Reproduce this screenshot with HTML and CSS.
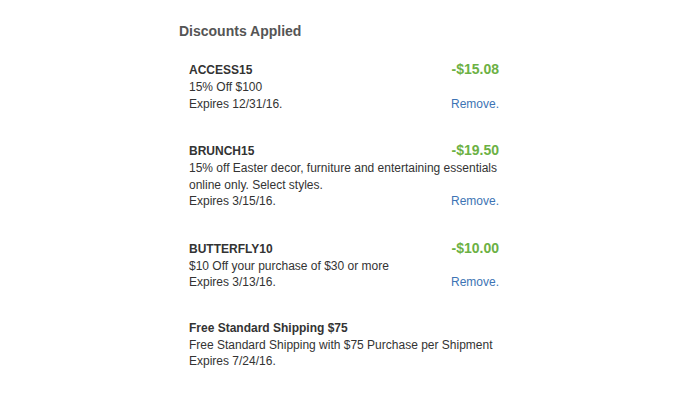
FILE: index.html
```html
<!DOCTYPE html>
<html>
<head>
<meta charset="utf-8">
<link rel="stylesheet" href="styles.css">
</head>
<body>
<section class="panel">
  <h2 class="title">Discounts Applied</h2>
  <div class="list">
    <div class="item">
      <div class="row head"><span class="code">ACCESS15</span><span class="amount">-$15.08</span></div>
      <div class="desc">15% Off $100</div>
      <div class="row"><span>Expires 12/31/16.</span><a class="remove" href="#">Remove.</a></div>
    </div>
    <div class="item">
      <div class="row head"><span class="code">BRUNCH15</span><span class="amount">-$19.50</span></div>
      <div class="desc">15% off Easter decor, furniture and entertaining essentials online only. Select styles.</div>
      <div class="row"><span>Expires 3/15/16.</span><a class="remove" href="#">Remove.</a></div>
    </div>
    <div class="item">
      <div class="row head"><span class="code">BUTTERFLY10</span><span class="amount">-$10.00</span></div>
      <div class="desc">$10 Off your purchase of $30 or more</div>
      <div class="row"><span>Expires 3/13/16.</span><a class="remove" href="#">Remove.</a></div>
    </div>
    <div class="item item-plain">
      <div class="row head"><span class="code">Free Standard Shipping $75</span></div>
      <div class="desc">Free Standard Shipping with $75 Purchase per Shipment</div>
      <div class="row"><span>Expires 7/24/16.</span></div>
    </div>
  </div>
</section>
</body>
</html>
```
FILE: styles.css
```css
html, body {
  margin: 0;
  padding: 0;
  background: #fff;
}
body {
  font-family: "Liberation Sans", Arial, Helvetica, sans-serif;
  color: #333;
  font-size: 12px;
}
.panel {
  margin-left: 179px;
  width: 320px;
  padding-top: 22px;
}
.title {
  margin: 0;
  font-size: 14px;
  line-height: 18px;
  font-weight: bold;
  color: #555;
}
.list {
  padding-left: 10px;
  padding-top: 20px;
  display: flex;
  flex-direction: column;
  gap: 29px;
}
.item-plain {
  margin-top: -1px;
}
.row {
  display: flex;
  justify-content: space-between;
  align-items: baseline;
  line-height: 16.5px;
}
.row.head {
  line-height: 18px;
}
.desc {
  line-height: 16.5px;
}
.code {
  font-weight: bold;
  color: #333;
}
.amount {
  font-weight: bold;
  font-size: 14px;
  color: #6cb144;
}
.remove {
  color: #3d74b4;
  text-decoration: none;
}
```
